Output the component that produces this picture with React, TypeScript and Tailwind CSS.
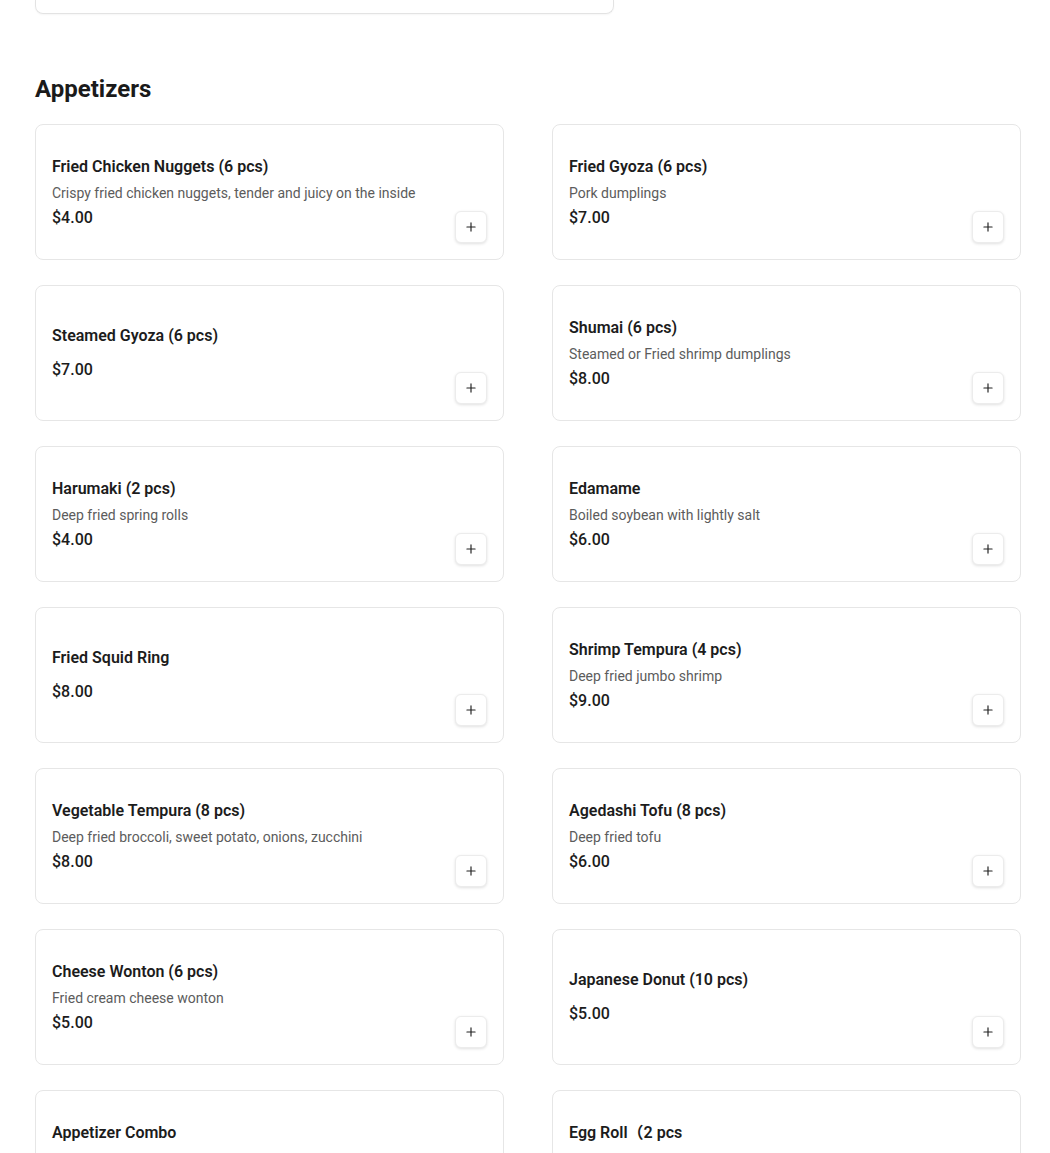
import { Plus } from "lucide-react";

type Item = {
  name: string;
  desc?: string;
  price: string;
};

const ITEMS: Item[] = [
  { name: "Fried Chicken Nuggets (6 pcs)", desc: "Crispy fried chicken nuggets, tender and juicy on the inside", price: "$4.00" },
  { name: "Fried Gyoza (6 pcs)", desc: "Pork dumplings", price: "$7.00" },
  { name: "Steamed Gyoza (6 pcs)", price: "$7.00" },
  { name: "Shumai (6 pcs)", desc: "Steamed or Fried shrimp dumplings", price: "$8.00" },
  { name: "Harumaki (2 pcs)", desc: "Deep fried spring rolls", price: "$4.00" },
  { name: "Edamame", desc: "Boiled soybean with lightly salt", price: "$6.00" },
  { name: "Fried Squid Ring", price: "$8.00" },
  { name: "Shrimp Tempura (4 pcs)", desc: "Deep fried jumbo shrimp", price: "$9.00" },
  { name: "Vegetable Tempura (8 pcs)", desc: "Deep fried broccoli, sweet potato, onions, zucchini", price: "$8.00" },
  { name: "Agedashi Tofu (8 pcs)", desc: "Deep fried tofu", price: "$6.00" },
  { name: "Cheese Wonton (6 pcs)", desc: "Fried cream cheese wonton", price: "$5.00" },
  { name: "Japanese Donut (10 pcs)", price: "$5.00" },
  { name: "Appetizer Combo", desc: "2 fried chicken nuggets, 2 shumai, 2 spring rolls, 2 fried gyoza", price: "$12.00" },
  { name: "Egg Roll（2 pcs", desc: "Deep fried chicken egg roll", price: "$4.00" },
];

function MenuCard({ item }: { item: Item }) {
  return (
    <div className="flex h-[136px] rounded-lg border border-[#e6e6e6] bg-white p-4">
      <div className="flex min-w-0 flex-1 flex-col justify-center">
        <h3 className="text-[16px] leading-6 font-semibold text-[#1c1c1c]">{item.name}</h3>
        {item.desc && (
          <p className="mt-1 text-[14px] leading-5 text-[#5c5c5c]">{item.desc}</p>
        )}
        <p className={`${item.desc ? "mt-[3px]" : "mt-[10px]"} text-[16px] leading-6 font-medium text-[#1c1c1c]`}>
          {item.price}
        </p>
      </div>
      <div className="flex items-end pl-3">
        <button className="flex h-8 w-8 items-center justify-center rounded-md border border-[#ececec] bg-white text-[#222] shadow-[0_1px_3px_rgba(0,0,0,0.12)]">
          <Plus size={14} strokeWidth={2} />
        </button>
      </div>
    </div>
  );
}

export default function App() {
  return (
    <div
      className="min-h-screen bg-white pl-[35px] pr-[29px]"
      style={{ fontFamily: "Roboto, 'Liberation Sans', 'Noto Sans CJK SC', sans-serif" }}
    >
      {/* tail of the previous section's card */}
      <div className="h-[14px] w-[579px] rounded-b-lg border-x border-b border-[#e3e3e3] shadow-[0_1px_2px_rgba(0,0,0,0.04)]" />

      <h2 className="mt-[59px] text-[24px] leading-8 font-bold text-[#1a1a1a]">Appetizers</h2>

      <div className="mt-[19px] grid grid-cols-2 gap-x-[48px] gap-y-[25px]">
        {ITEMS.map((item) => (
          <MenuCard key={item.name} item={item} />
        ))}
      </div>
    </div>
  );
}
